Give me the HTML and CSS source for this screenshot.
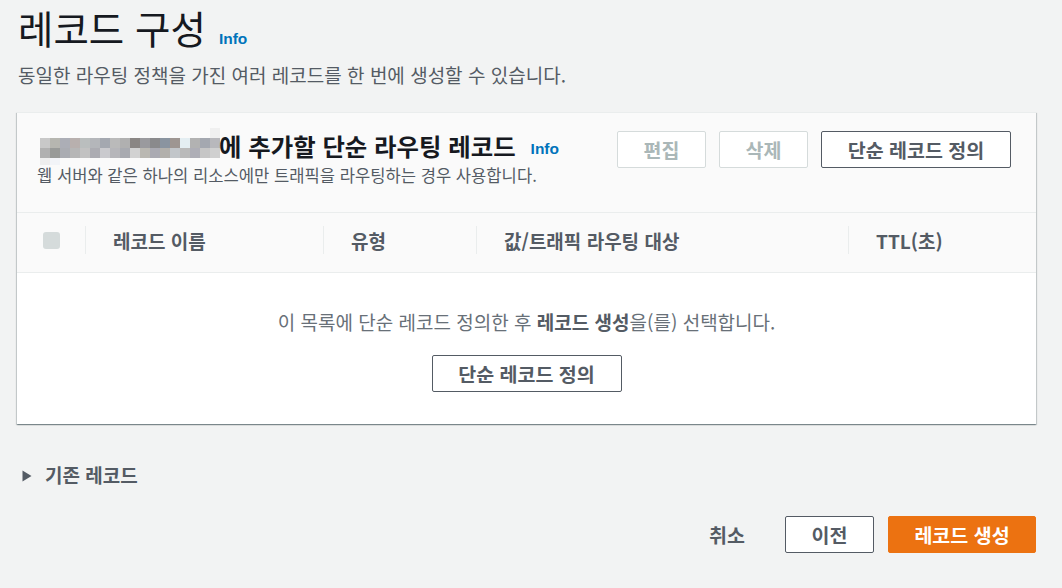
FILE: index.html
```html
<!DOCTYPE html>
<html lang="ko">
<head>
<meta charset="utf-8">
<title>레코드 구성</title>
<link rel="stylesheet" href="styles.css">
</head>
<body>
<div class="page">
  <div class="page-head">
    <h1 class="page-title">레코드 구성</h1>
    <a class="info info-lg">Info</a>
  </div>
  <p class="page-desc">동일한 라우팅 정책을 가진 여러 레코드를 한 번에 생성할 수 있습니다.</p>

  <section class="card">
    <div class="card-head">
      <div class="card-head-text">
        <div class="card-title-row">
          <span class="blur" aria-hidden="true">
            <i style="background:#fafafa"></i><i style="background:#fafafa"></i><i style="background:#fafafa"></i><i style="background:#fafafa"></i><i style="background:#fafafa"></i><i style="background:#fafafa"></i><i style="background:#fafafa"></i><i style="background:#fafafa"></i><i style="background:#fafafa"></i><i style="background:#fafafa"></i><i style="background:#fafafa"></i><i style="background:#fafafa"></i><i style="background:#fafafa"></i><i style="background:#fafafa"></i><i style="background:#fafafa"></i><i style="background:#fafafa"></i><i style="background:#fafafa"></i><i style="background:#f0f0f0"></i>
            <i style="background:#c8c8c8"></i><i style="background:#b6b6b0"></i><i style="background:#acaeb6"></i><i style="background:#b8b0ae"></i><i style="background:#babebe"></i><i style="background:#b4b6ba"></i><i style="background:#a4a8b0"></i><i style="background:#bababa"></i><i style="background:#b0b0b0"></i><i style="background:#8a8684"></i><i style="background:#9a9a9e"></i><i style="background:#8a8a8c"></i><i style="background:#8a94a0"></i><i style="background:#9e9692"></i><i style="background:#e4eef2"></i><i style="background:#b2b2b2"></i><i style="background:#a4a8b0"></i><i style="background:#b8b8bc"></i>
            <i style="background:#b0b0b0"></i><i style="background:#989a98"></i><i style="background:#aaacb2"></i><i style="background:#b6b6b6"></i><i style="background:#c2c2c2"></i><i style="background:#acacb2"></i><i style="background:#cacace"></i><i style="background:#b6b6ba"></i><i style="background:#a8aab0"></i><i style="background:#d2d2d2"></i><i style="background:#bab8b2"></i><i style="background:#aaaab2"></i><i style="background:#b2b0ac"></i><i style="background:#c2c6ca"></i><i style="background:#bababa"></i><i style="background:#aeaeb6"></i><i style="background:#c6c6c6"></i><i style="background:#d0d0d0"></i>
            <i style="background:#eeeeee"></i><i style="background:#f2f4f8"></i><i style="background:#fafafa"></i><i style="background:#fafafa"></i><i style="background:#fafafa"></i><i style="background:#fafafa"></i><i style="background:#fafafa"></i><i style="background:#fafafa"></i><i style="background:#fafafa"></i><i style="background:#fafafa"></i><i style="background:#fafafa"></i><i style="background:#fafafa"></i><i style="background:#fafafa"></i><i style="background:#fafafa"></i><i style="background:#fafafa"></i><i style="background:#fafafa"></i><i style="background:#fafafa"></i><i style="background:#fafafa"></i>
          </span>
          <h2 class="card-title">에 추가할 단순 라우팅 레코드</h2>
          <a class="info info-md">Info</a>
        </div>
        <p class="card-sub">웹 서버와 같은 하나의 리소스에만 트래픽을 라우팅하는 경우 사용합니다.</p>
      </div>
      <div class="card-actions">
        <button class="btn btn-disabled btn-sm">편집</button>
        <button class="btn btn-disabled btn-sm">삭제</button>
        <button class="btn btn-normal btn-wide">단순 레코드 정의</button>
      </div>
    </div>

    <div class="table-head">
      <div class="th th-check"><span class="checkbox"></span></div>
      <div class="th"><span class="th-label">레코드 이름</span></div>
      <div class="th"><span class="th-label">유형</span></div>
      <div class="th"><span class="th-label">값/트래픽 라우팅 대상</span></div>
      <div class="th"><span class="th-label">TTL(초)</span></div>
    </div>

    <div class="table-empty">
      <p class="empty-msg">이 목록에 단순 레코드 정의한 후 <b>레코드 생성</b>을(를) 선택합니다.</p>
      <button class="btn btn-normal btn-wide">단순 레코드 정의</button>
    </div>
  </section>

  <div class="expander">
    <svg class="caret" width="10" height="12" viewBox="0 0 10 12"><path d="M0.5 0.5 L9.5 6 L0.5 11.5 Z" fill="#545b64"/></svg>
    <span class="expander-label">기존 레코드</span>
  </div>

  <div class="footer">
    <button class="btn btn-link">취소</button>
    <button class="btn btn-normal btn-prev">이전</button>
    <button class="btn btn-primary">레코드 생성</button>
  </div>
</div>
</body>
</html>
```

FILE: styles.css
```css
* { box-sizing: border-box; }

html, body {
  margin: 0;
  padding: 0;
  background: #f2f3f3;
}

body {
  font-family: "Noto Sans CJK KR", "Noto Sans", "Liberation Sans", sans-serif;
  color: #16191f;
}

.page {
  padding: 0 26px 0 17px;
}

.page-head {
  display: flex;
  align-items: baseline;
  gap: 13px;
  padding: 2px 0 0 1px;
  height: 50px;
}

.page-title {
  margin: 0;
  font-size: 38.5px;
  font-weight: 400;
  line-height: 50px;
  color: #16191f;
}

.info {
  font-family: "Liberation Sans", Arial, sans-serif;
  font-weight: 700;
  color: #0073bb;
  text-decoration: none;
}

.info-lg { font-size: 15.5px; }
.info-md { font-size: 15.5px; margin-left: 15px; }

.page-desc {
  margin: 0;
  padding-left: 1px;
  font-size: 19px;
  line-height: 50px;
  color: #545b64;
}

.card {
  margin-top: 12px;
  background: #ffffff;
  box-shadow: 0 1px 1px 0 rgba(0, 28, 36, 0.3), 1px 1px 1px 0 rgba(0, 28, 36, 0.15), -1px 1px 1px 0 rgba(0, 28, 36, 0.15);
  border-top: 1px solid #eaeded;
}

.card-head {
  display: flex;
  justify-content: space-between;
  align-items: flex-start;
  background: #fafafa;
  height: 99px;
  padding: 17px 25px 0 23px;
}

.card-head-text {
  margin-top: -2px;
}

.card-title-row {
  display: flex;
  align-items: center;
  height: 36px;
}

.blur {
  display: grid;
  grid-template-columns: repeat(18, 10px);
  grid-template-rows: 10px 10px 10px 7px;
}

.blur i { display: block; }

.card-title {
  margin: 0 0 0 -1px;
  font-size: 24.4px;
  font-weight: 700;
  line-height: 30px;
  color: #16191f;
}

.card-title-row .info { align-self: center; margin-top: 6px; }

.card-sub {
  margin: 0;
  font-size: 16.6px;
  line-height: 22px;
  color: #545b64;
  margin-left: -3px;
}

.card-actions {
  display: flex;
  gap: 13px;
  margin-top: 1px;
}

.btn {
  font-family: "Noto Sans CJK KR", "Noto Sans", "Liberation Sans", sans-serif;
  font-weight: 700;
  font-size: 19.5px;
  height: 37px;
  line-height: 33px;
  padding: 0 10px;
  border-radius: 2px;
  background: #ffffff;
  cursor: pointer;
  white-space: nowrap;
}

.btn-sm { width: 89px; }
.btn-wide { width: 190px; }
.btn-prev { width: 89px; }

.btn-disabled {
  border: 1px solid #d5dbdb;
  color: #aab7b8;
}

.btn-normal {
  border: 1px solid #545b64;
  color: #545b64;
}

.btn-primary {
  border: 1px solid #ec7211;
  background: #ec7211;
  color: #ffffff;
  width: 148px;
}

.btn-link {
  border: 1px solid transparent;
  background: transparent;
  color: #545b64;
}

.table-head {
  display: grid;
  grid-template-columns: 68px 238px 153px 372px 1fr;
  height: 61px;
  padding-bottom: 5px;
  background: #fafafa;
  border-top: 1px solid #eaeded;
  border-bottom: 1px solid #eaeded;
  align-items: center;
}

.th {
  height: 28px;
  display: flex;
  align-items: center;
  border-left: 1px solid #eaeded;
  padding-left: 27px;
}

.th-check {
  border-left: none;
  padding-left: 26px;
}

.checkbox {
  display: block;
  width: 17px;
  height: 17px;
  border-radius: 3px;
  background: #d5dbdb;
}

.th-label {
  font-size: 19px;
  font-weight: 700;
  color: #545b64;
  white-space: nowrap;
}

.table-empty {
  height: 151px;
  display: flex;
  flex-direction: column;
  align-items: center;
  padding-top: 34px;
}

.empty-msg {
  margin: 0 0 18px 0;
  font-size: 19px;
  line-height: 30px;
  color: #687078;
}

.empty-msg b { color: #545b64; }

.expander {
  display: flex;
  align-items: center;
  margin-top: 38px;
  padding-left: 5px;
  height: 24px;
}

.caret { display: block; margin-top: 3px; }

.expander-label {
  margin-left: 13px;
  font-size: 19px;
  font-weight: 700;
  color: #545b64;
}

.footer {
  display: flex;
  justify-content: flex-end;
  align-items: center;
  gap: 14px;
  margin-top: 30px;
}

.footer .btn-link { margin-right: 15px; }
```
